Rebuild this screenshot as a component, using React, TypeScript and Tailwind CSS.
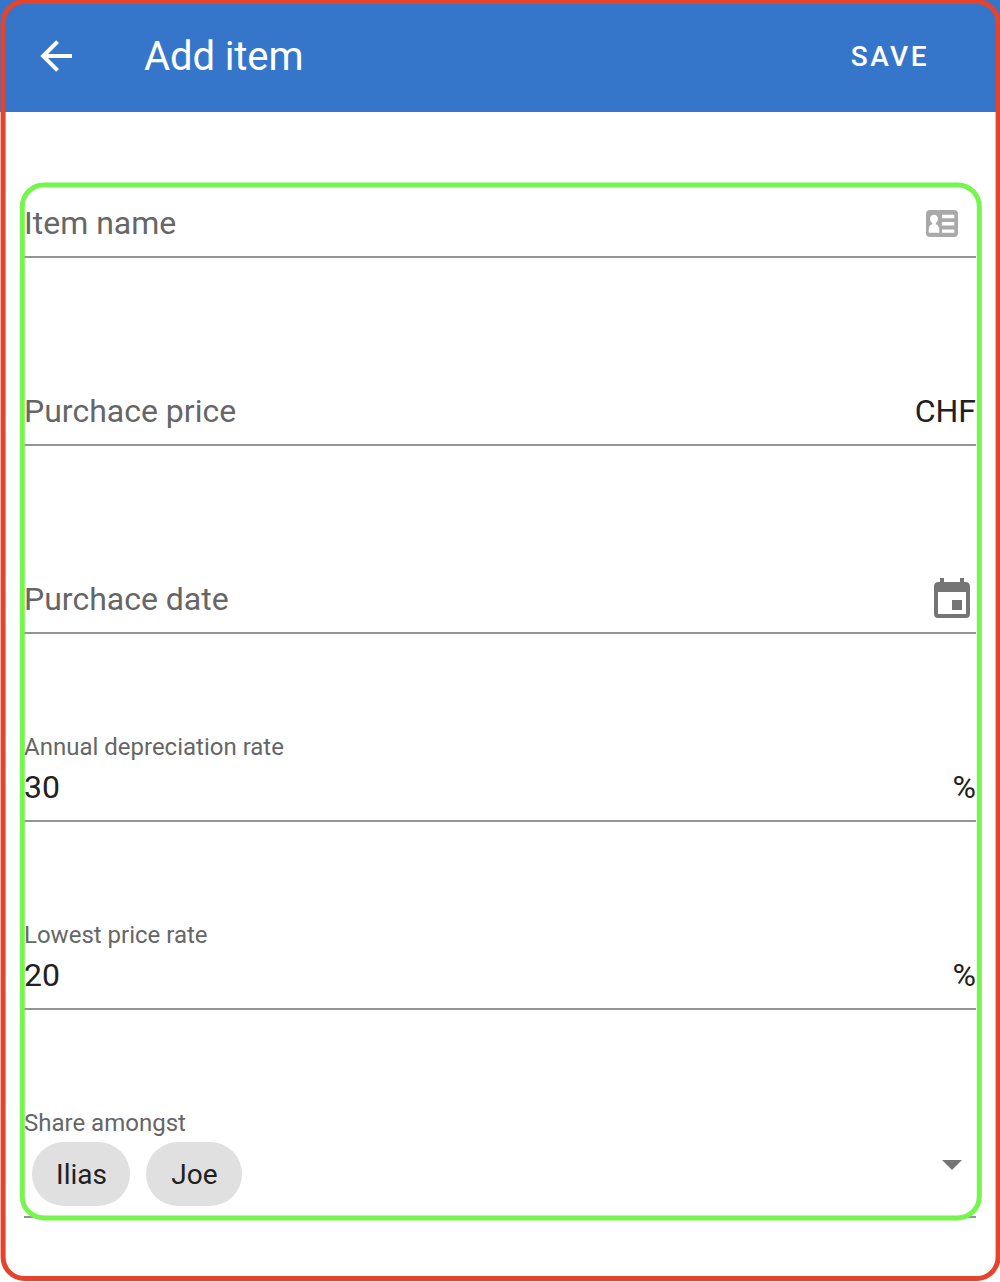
import type { ReactNode } from "react";

function Field({ label, value, suffix }: { label: string; value?: string; suffix?: ReactNode }) {
  return (
    <div className="flex h-[188px] flex-col justify-end border-b-2 border-[#949494]">
      {value && <div className="h-5 text-2xl leading-6 whitespace-nowrap text-[#666]">{label}</div>}
      <div className="mb-px flex h-16 items-center justify-between text-[32px] leading-10 text-[#212121]">
        {value ? <span>{value}</span> : <span className="text-[#666]">{label}</span>}
        {suffix}
      </div>
    </div>
  );
}

function ContactIcon() {
  return (
    <svg className="mt-px mr-[18px] h-[27px] w-8" viewBox="0 0 32 27">
      <rect width="32" height="27" rx="4" fill="#a9a9a9" />
      <path d="M8 4.700C10.300 4.700 12 6.400 12 8.800C12 10.800 11 12.200 9.800 13V14.200C12.200 14.800 13.300 17.200 13.300 20.200V22.800H2.700V20.200C2.700 17.200 3.800 14.800 6.200 14.200V13C5 12.200 4 10.800 4 8.800C4 6.400 5.700 4.700 8 4.700Z" fill="#fff" />
      <path d="M16 4.700h12.300v3.500H16zM16 12h12.300v3.400H16zM16 19.400h12.300v3.400H16z" fill="#fff" />
    </svg>
  );
}

function CalendarIcon() {
  return (
    <svg className="mt-0.5 h-12 w-12" viewBox="0 0 24 24" fill="#757575">
      <path d="M19,19H5V8H19M16,1V3H8V1H6V3H5C3.890,3 3,3.890 3,5V19A2,2 0 0,0 5,21H19A2,2 0 0,0 21,19V5C21,3.890 20.100,3 19,3H18V1M17,12H12V17H17V12Z" />
    </svg>
  );
}

function Chip({ children, width }: { children: ReactNode; width: string }) {
  return (
    <span className={`flex h-16 items-center justify-center rounded-full bg-[#e0e0e0] pt-0.5 pl-px text-[28px] leading-10 text-[#212121] ${width}`}>
      {children}
    </span>
  );
}

export default function App() {
  return (
    <div className="relative h-[1282px] w-[1000px] overflow-hidden bg-white font-['Roboto',sans-serif]">
      <header className="flex h-28 items-center justify-between bg-[#3576cb] pr-[71px] pl-8 text-white">
        <div className="flex items-center">
          <svg className="h-12 w-12" viewBox="0 0 24 24" fill="currentColor">
            <path d="M20,11V13H8L13.500,18.500L12.080,19.920L4.160,12L12.080,4.080L13.500,5.500L8,11H20Z" />
          </svg>
          <h1 className="ml-16 pt-0.5 text-[40px] leading-[60px] tracking-[-0.1px]">Add item</h1>
        </div>
        <button className="pt-0.5 text-[28px] font-medium tracking-[2.500px]">SAVE</button>
      </header>

      <main className="-mt-[42px] px-6">
        <Field label="Item name" suffix={<ContactIcon />} />
        <Field label="Purchace price" suffix={<span>CHF</span>} />
        <Field label="Purchace date" suffix={<CalendarIcon />} />
        <Field label="Annual depreciation rate" value="30" suffix={<span>%</span>} />
        <Field label="Lowest price rate" value="20" suffix={<span>%</span>} />
        <div className="flex h-[208px] flex-col border-b-2 border-[#949494] pt-[101px]">
          <div className="h-[31px] text-2xl leading-6 text-[#666]">Share amongst</div>
          <div className="flex h-16 items-center justify-between pl-2">
            <div className="flex gap-4">
              <Chip width="w-[98px]">Ilias</Chip>
              <Chip width="w-24">Joe</Chip>
            </div>
            <svg className="mr-[14px] mb-[18px] h-[10px] w-5" viewBox="0 0 20 10" fill="#757575">
              <path d="M0 0H20L10 10Z" />
            </svg>
          </div>
        </div>
      </main>

      <div className="pointer-events-none absolute top-[182px] left-5 h-[1038px] w-[962px] translate-x-[-0.2px] translate-y-[0.4px] rounded-[24px] border-[5px] border-[#76f54e]" />
      <div className="pointer-events-none absolute -top-px left-px h-[1282px] w-[1000px] translate-x-[-0.4px] rounded-[24px] border-[5px] border-[#e5432b]" />
    </div>
  );
}
